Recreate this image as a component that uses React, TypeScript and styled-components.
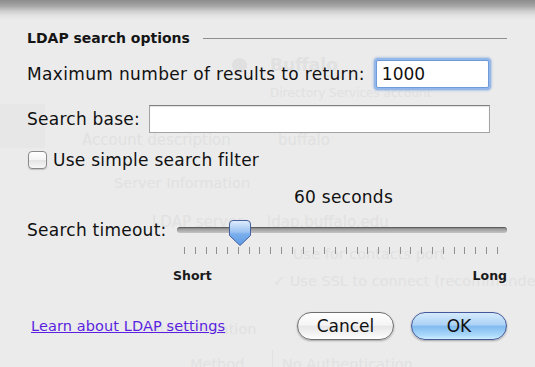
import React from "react";
import styled, { createGlobalStyle } from "styled-components";

const GlobalStyle = createGlobalStyle`
  html, body { margin: 0; padding: 0; background: #ebebeb; }
  body { font-family: "DejaVu Sans", "Liberation Sans", sans-serif; color: #111; }
`;

const Page = styled.div`
  position: relative;
  width: 535px;
  height: 367px;
  overflow: hidden;
  background: linear-gradient(
    to bottom,
    #8c8c8c 0px,
    #a6a6a6 6px,
    #cdcdcd 11px,
    #e4e4e4 16px,
    #ebebeb 21px,
    #ebebeb 100%
  );
`;

const Ghost = styled.div<{ $x: number; $y: number; $bold?: boolean; $size?: number }>`
  position: absolute;
  left: ${(p) => p.$x}px;
  top: ${(p) => p.$y}px;
  font-size: ${(p) => p.$size ?? 14}px;
  font-weight: ${(p) => (p.$bold ? 700 : 400)};
  color: #e1e1e1;
  white-space: nowrap;
  line-height: 1;
  pointer-events: none;
`;

const Sheet = styled.div`
  position: relative;
  display: flex;
  flex-direction: column;
  padding: 30px 28px 0 27px;
`;

const SectionHeader = styled.div`
  display: flex;
  align-items: center;
  gap: 13px;
  font-size: 14px;
  font-weight: 700;
  height: 16px;
  color: #151515;
  &::after {
    content: "";
    flex: 1;
    height: 1px;
    background: #8e8e8e;
  }
`;

const Row = styled.div<{ $mt: number; $h: number }>`
  display: flex;
  align-items: center;
  height: ${(p) => p.$h}px;
  margin-top: ${(p) => p.$mt}px;
`;

const Label = styled.span<{ $spacing?: number }>`
  font-size: 17px;
  letter-spacing: ${(p) => p.$spacing ?? 0.25}px;
  white-space: nowrap;
`;

const TextField = styled.div<{ $focus?: boolean; $width: number; $ml: number }>`
  box-sizing: border-box;
  width: ${(p) => p.$width}px;
  height: 28px;
  margin-left: ${(p) => p.$ml}px;
  background: #fff;
  border: 1px solid ${(p) => (p.$focus ? "#6f9bd8" : "#a3a3a3")};
  border-top-color: ${(p) => (p.$focus ? "#6f9bd8" : "#7f7f7f")};
  box-shadow: ${(p) =>
    p.$focus
      ? "0 0 0 2px #93b7e8, 0 0 2px 3px rgba(120,160,220,0.45)"
      : "inset 0 1px 1px rgba(0,0,0,0.12)"};
  border-radius: ${(p) => (p.$focus ? 2 : 0)}px;
  font-size: 17px;
  display: flex;
  align-items: center;
  padding-left: 5px;
  color: #111;
`;

const CheckRow = styled.label`
  display: flex;
  align-items: center;
  gap: 6px;
  height: 20px;
  margin-top: 17px;
  margin-left: 1px;
  font-size: 17px;
  letter-spacing: 0.25px;
`;

const CheckBox = styled.span`
  box-sizing: border-box;
  width: 19px;
  height: 18px;
  border: 1px solid #8a8a8a;
  border-radius: 4px;
  background: linear-gradient(to bottom, #ffffff 0%, #f3f3f3 50%, #e4e4e4 52%, #f7f7f7 100%);
  box-shadow: 0 1px 1px rgba(0, 0, 0, 0.18);
`;

const ValueText = styled.div`
  font-size: 17px;
  letter-spacing: 0.25px;
  margin-top: 17px;
  margin-left: 267px;
  height: 20px;
  line-height: 20px;
`;

const SliderRow = styled.div`
  display: flex;
  align-items: center;
  height: 26px;
  margin-top: 10px;
`;

const SliderWrap = styled.div`
  position: relative;
  flex: 1;
  margin-left: 10px;
  height: 26px;
  display: flex;
  align-items: center;
`;

const Track = styled.div`
  width: 100%;
  height: 6px;
  border-radius: 3px;
  background: linear-gradient(to bottom, #7a7a7a 0%, #a4a4a4 45%, #c4c4c4 100%);
  box-shadow: inset 0 1px 1px rgba(0, 0, 0, 0.3);
`;

const Knob = styled.svg`
  position: absolute;
  top: 3px;
  left: 52px;
`;

const Ticks = styled.div`
  display: flex;
  justify-content: space-between;
  margin: 4px 9px 0 157px;
  height: 7px;
`;

const Tick = styled.span`
  width: 1px;
  height: 7px;
  background: #8f8f8f;
`;

const RangeLabels = styled.div`
  display: flex;
  justify-content: space-between;
  align-items: center;
  height: 16px;
  margin: 13px 0 0 146px;
  font-size: 12.5px;
  font-weight: 700;
  color: #1a1a1a;
`;

const Footer = styled.div`
  display: flex;
  align-items: center;
  height: 28px;
  margin-top: 29px;
  margin-left: 4px;
`;

const HelpLink = styled.a`
  font-size: 14.5px;
  letter-spacing: 0.1px;
  color: #5a1fe0;
  text-decoration: underline;
  flex: 1;
  cursor: pointer;
`;

const Button = styled.button<{ $primary?: boolean }>`
  box-sizing: border-box;
  width: ${(p) => (p.$primary ? 96 : 97)}px;
  height: 28px;
  margin-left: ${(p) => (p.$primary ? 17 : 0)}px;
  border-radius: 14px;
  font-family: inherit;
  font-size: 17px;
  color: #111;
  border: 1px solid ${(p) => (p.$primary ? "#45599a" : "#6e6e6e")};
  background: ${(p) =>
    p.$primary
      ? "linear-gradient(to bottom, #d6ebfc 0%, #acd2f6 45%, #82bbef 52%, #a9d8fb 85%, #cdeeff 100%)"
      : "linear-gradient(to bottom, #ffffff 0%, #f5f5f5 45%, #e7e7e7 52%, #f6f6f6 85%, #ffffff 100%)"};
  box-shadow: 0 1px 2px rgba(0, 0, 0, 0.3);
  padding: 0;
`;

const GhostIcon = styled.div`
  position: absolute;
  left: 232px;
  top: 58px;
  width: 15px;
  height: 15px;
  border-radius: 50%;
  background: #e0e0e0;
  pointer-events: none;
`;

const GhostLine = styled.div<{ $x: number; $y: number; $w: number; $h: number; $c?: string }>`
  position: absolute;
  left: ${(p) => p.$x}px;
  top: ${(p) => p.$y}px;
  width: ${(p) => p.$w}px;
  height: ${(p) => p.$h}px;
  background: ${(p) => p.$c ?? "#e2e2e2"};
  pointer-events: none;
`;

const ghosts: { x: number; y: number; t: string; bold?: boolean; size?: number }[] = [
  { x: 270, y: 57, t: "Buffalo", bold: true, size: 17 },
  { x: 270, y: 87, t: "Directory Services account", size: 12 },
  { x: 82, y: 133, t: "Account description", size: 15 },
  { x: 278, y: 133, t: "buffalo", size: 15 },
  { x: 114, y: 176, t: "Server Information", size: 14.5 },
  { x: 152, y: 215, t: "LDAP server:", size: 15 },
  { x: 267, y: 215, t: "ldap.buffalo.edu", size: 15 },
  { x: 293, y: 247, t: "Use for contacts port", size: 14.5 },
  { x: 273, y: 274, t: "✓ Use SSL to connect (recommended)", size: 14.5 },
  { x: 150, y: 322, t: "Authentication", size: 14.5 },
  { x: 190, y: 357, t: "Method", size: 14.5 },
  { x: 282, y: 357, t: "No Authentication", size: 14.5 },
];

export default function App() {
  const ticks = Array.from({ length: 30 });
  return (
    <>
      <GlobalStyle />
      <Page>
        <GhostLine $x={0} $y={104} $w={45} $h={44} $c="#e7e7e7" />
        <GhostIcon />
        {ghosts.map((g, i) => (
          <Ghost key={i} $x={g.x} $y={g.y} $bold={g.bold} $size={g.size}>
            {g.t}
          </Ghost>
        ))}
        <GhostLine $x={272} $y={350} $w={1} $h={17} />
        <Sheet>
          <SectionHeader>LDAP search options</SectionHeader>
          <Row $mt={13} $h={30}>
            <Label $spacing={0.35}>Maximum number of results to return:</Label>
            <TextField $focus $width={113} $ml={11}>
              1000
            </TextField>
          </Row>
          <Row $mt={16} $h={28}>
            <Label>Search base:</Label>
            <TextField $width={341} $ml={9} />
          </Row>
          <CheckRow>
            <CheckBox />
            Use simple search filter
          </CheckRow>
          <ValueText>60 seconds</ValueText>
          <SliderRow>
            <Label>Search timeout:</Label>
            <SliderWrap>
              <Track />
              <Knob width="22" height="26" viewBox="0 0 22 26">
                <defs>
                  <linearGradient id="kg" x1="0" y1="0" x2="0" y2="1">
                    <stop offset="0" stopColor="#e2eefc" />
                    <stop offset="0.45" stopColor="#9cc3f1" />
                    <stop offset="0.55" stopColor="#79aeec" />
                    <stop offset="1" stopColor="#5d9be6" />
                  </linearGradient>
                </defs>
                <path
                  d="M4 0.5 H18 Q21.5 0.5 21.5 4 V15.5 L11 25.5 L0.5 15.5 V4 Q0.5 0.5 4 0.5 Z"
                  fill="url(#kg)"
                  stroke="#45609c"
                  strokeWidth="1"
                />
              </Knob>
            </SliderWrap>
          </SliderRow>
          <Ticks>
            {ticks.map((_, i) => (
              <Tick key={i} />
            ))}
          </Ticks>
          <RangeLabels>
            <span>Short</span>
            <span>Long</span>
          </RangeLabels>
          <Footer>
            <HelpLink>Learn about LDAP settings</HelpLink>
            <Button>Cancel</Button>
            <Button $primary>OK</Button>
          </Footer>
        </Sheet>
      </Page>
    </>
  );
}
